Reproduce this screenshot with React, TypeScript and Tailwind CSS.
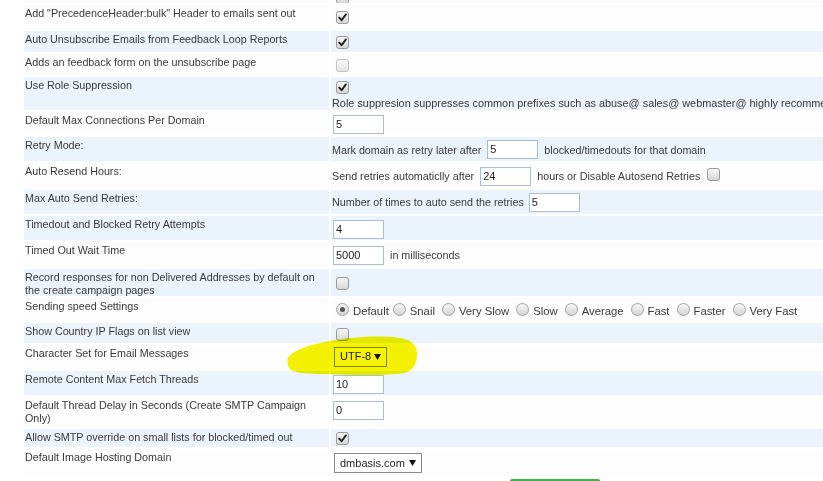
import React from "react";

const Cb = ({ checked = false, light = false }: { checked?: boolean; light?: boolean }) => (
  <span
    className={`inline-flex w-[13px] h-[13px] rounded-[3px] border items-center justify-center shrink-0 ${
      light ? "border-[#c4c4c4] bg-linear-to-b from-[#fafafa] to-[#e6e6e6]" : "border-[#9a9a9a] bg-linear-to-b from-[#f7f7f7] to-[#d6d6d6]"
    }`}
  >
    {checked && (
      <svg width="9" height="9" viewBox="0 0 9 9">
        <path d="M1.2 4.6 L3.6 7.2 L7.9 1.4" stroke="#1f1f1f" strokeWidth="1.9" fill="none" strokeLinecap="round" strokeLinejoin="round" />
      </svg>
    )}
  </span>
);

const Radio = ({ on = false }: { on?: boolean }) => (
  <span className="inline-flex w-[13px] h-[13px] rounded-full border border-[#a0a0a0] bg-linear-to-b from-[#f7f7f7] to-[#d4d4d4] items-center justify-center shrink-0">
    {on && <span className="w-[5px] h-[5px] rounded-full bg-[#555]" />}
  </span>
);

const Inp = ({ v }: { v: string }) => (
  <span className="inline-flex items-center w-[51px] h-[19px] border border-[#a9bfd6] bg-white pl-[2px] text-[11px] text-[#222] shrink-0">
    {v}
  </span>
);

const Sel = ({ v, w }: { v: string; w: string }) => (
  <span className={`inline-flex items-center h-[20px] border border-[#8a8a8a] bg-white pl-[5px] pr-[5px] text-[11px] text-[#222] ${w}`}>
    <span>{v}</span>
    <svg className="ml-auto" width="7" height="6" viewBox="0 0 7 6">
      <polygon points="0,0 7,0 3.5,6" fill="#111" />
    </svg>
  </span>
);

const Row = ({
  label,
  blue = false,
  h,
  children,
  col = false,
}: {
  label: React.ReactNode;
  blue?: boolean;
  h: string;
  children?: React.ReactNode;
  col?: boolean;
}) => {
  const bg = blue ? "bg-[#ebf3fc]" : "bg-[#fdfdfd]";
  return (
    <div className={`flex gap-[2px] shrink-0 ${h}`}>
      <div className={`w-[305px] shrink-0 pl-[1px] pt-[2px] leading-[13px] ${bg}`}>{label}</div>
      <div className={`flex-1 min-w-0 overflow-hidden whitespace-nowrap ${bg} ${col ? "flex flex-col justify-start items-start" : "flex items-center"}`}>
        {children}
      </div>
    </div>
  );
};

const speeds = ["Default", "Snail", "Very Slow", "Slow", "Average", "Fast", "Faster", "Very Fast"];

export default function App() {
  return (
    <div className="relative w-[823px] h-[481px] overflow-hidden bg-white font-['Liberation_Sans',Arial,sans-serif] text-[10.75px] text-[#3a3a3a]">
      <div className="-mt-[17px] ml-[24px] flex flex-col gap-[2px]">
        <Row h="h-[20px]" label="">
          <span className="flex ml-[5px] mt-[8px]"><Cb /></span>
        </Row>
        <Row h="h-[24px]" label={'Add "PrecedenceHeader:bulk" Header to emails sent out'}>
          <span className="flex ml-[5px] mt-[1px]"><Cb checked /></span>
        </Row>
        <Row blue h="h-[21px]" label="Auto Unsubscribe Emails from Feedback Loop Reports">
          <span className="flex ml-[5px] mt-[1px]"><Cb checked /></span>
        </Row>
        <Row h="h-[21px]" label="Adds an feedback form on the unsubscribe page">
          <span className="flex ml-[5px] mt-[1px]"><Cb light /></span>
        </Row>
        <Row blue col h="h-[33px]" label="Use Role Suppression">
          <span className="flex ml-[5px] mt-[4px]"><Cb checked /></span>
          <span className="block ml-[1px] mt-[3px] leading-[13px] text-[10.9px]">
            Role suppresion suppresses common prefixes such as abuse@ sales@ webmaster@ highly recommended
          </span>
        </Row>
        <Row h="h-[23px]" label="Default Max Connections Per Domain">
          <span className="flex ml-[2px] mt-[2px]"><Inp v="5" /></span>
        </Row>
        <Row blue h="h-[24px]" label="Retry Mode:">
          <span className="ml-[1px] mt-[2px]">Mark domain as retry later after</span>
          <span className="flex ml-[6px] mt-[1px]"><Inp v="5" /></span>
          <span className="ml-[6px] mt-[2px]">blocked/timedouts for that domain</span>
        </Row>
        <Row h="h-[25px]" label="Auto Resend Hours:">
          <span className="ml-[1px] mt-[2px]">Send retries automaticlly after</span>
          <span className="flex ml-[6px] mt-[1px]"><Inp v="24" /></span>
          <span className="ml-[6px] mt-[2px]">hours or Disable Autosend Retries</span>
          <span className="flex ml-[7px] -mt-[3px]"><Cb /></span>
        </Row>
        <Row blue h="h-[24px]" label="Max Auto Send Retries:">
          <span className="ml-[1px] mt-[1px]">Number of times to auto send the retries</span>
          <span className="flex ml-[5px] mt-[1px]"><Inp v="5" /></span>
        </Row>
        <Row blue h="h-[24px]" label="Timedout and Blocked Retry Attempts">
          <span className="flex ml-[2px] mt-[2px]"><Inp v="4" /></span>
        </Row>
        <Row h="h-[25px]" label="Timed Out Wait Time">
          <span className="flex ml-[2px] mt-[2px]"><Inp v="5000" /></span>
          <span className="ml-[6px] mt-[2px]">in milliseconds</span>
        </Row>
        <Row blue h="h-[27px]" label={<>Record responses for non Delivered Addresses by default on<br />the create campaign pages</>}>
          <span className="flex ml-[5px] mt-[2px]"><Cb /></span>
        </Row>
        <Row h="h-[23px]" label="Sending speed Settings">
          <div className="ml-[5px] mt-[2px] flex items-center text-[11.3px]">
            {speeds.map((s, i) => (
              <span key={s} className={`flex items-center ${i === 1 ? "ml-[4px]" : i > 1 ? "ml-[7px]" : ""}`}>
                <span className="flex -mt-[3px]"><Radio on={i === 0} /></span>
                <span className="ml-[4px] mt-[1px]">{s}</span>
              </span>
            ))}
          </div>
        </Row>
        <Row blue h="h-[20px]" label="Show Country IP Flags on list view">
          <span className="flex ml-[5px] mt-[2px]"><Cb /></span>
        </Row>
        <Row h="h-[24px]" label="Character Set for Email Messages">
          <span className="flex ml-[3px] -mt-[1px]"><Sel v="UTF-8" w="w-[53px]" /></span>
        </Row>
        <Row blue h="h-[24px]" label="Remote Content Max Fetch Threads">
          <span className="flex ml-[2px] mt-[2px]"><Inp v="10" /></span>
        </Row>
        <Row h="h-[30px]" label={<>Default Thread Delay in Seconds (Create SMTP Campaign<br />Only)</>}>
          <span className="flex ml-[2px] -mt-[3px]"><Inp v="0" /></span>
        </Row>
        <Row blue h="h-[18px]" label="Allow SMTP override on small lists for blocked/timed out">
          <span className="flex ml-[5px] mt-[1px]"><Cb checked /></span>
        </Row>
        <Row h="h-[26px]" label="Default Image Hosting Domain">
          <span className="flex ml-[3px] mt-[2px]"><Sel v="dmbasis.com" w="w-[88px]" /></span>
        </Row>
      </div>
      <div className="ml-[510px] mt-[4px] w-[90px] h-[22px] rounded-t-[2px] border-t-[2px] border-[#3fb24a] bg-[#5cc565]" />
      <svg className="absolute left-0 top-0 mix-blend-multiply pointer-events-none" width="823" height="481">
        <path
          d="M289,356 C296,349 312,344 330,341 C352,337 380,335 400,338 C412,340 418,346 417,356 C416,365 413,371 404,373 C385,376 352,375 325,374 C306,374 292,373 289,368 C287,364 287,359 289,356 Z"
          fill="#f6f300"
        />
      </svg>
    </div>
  );
}
